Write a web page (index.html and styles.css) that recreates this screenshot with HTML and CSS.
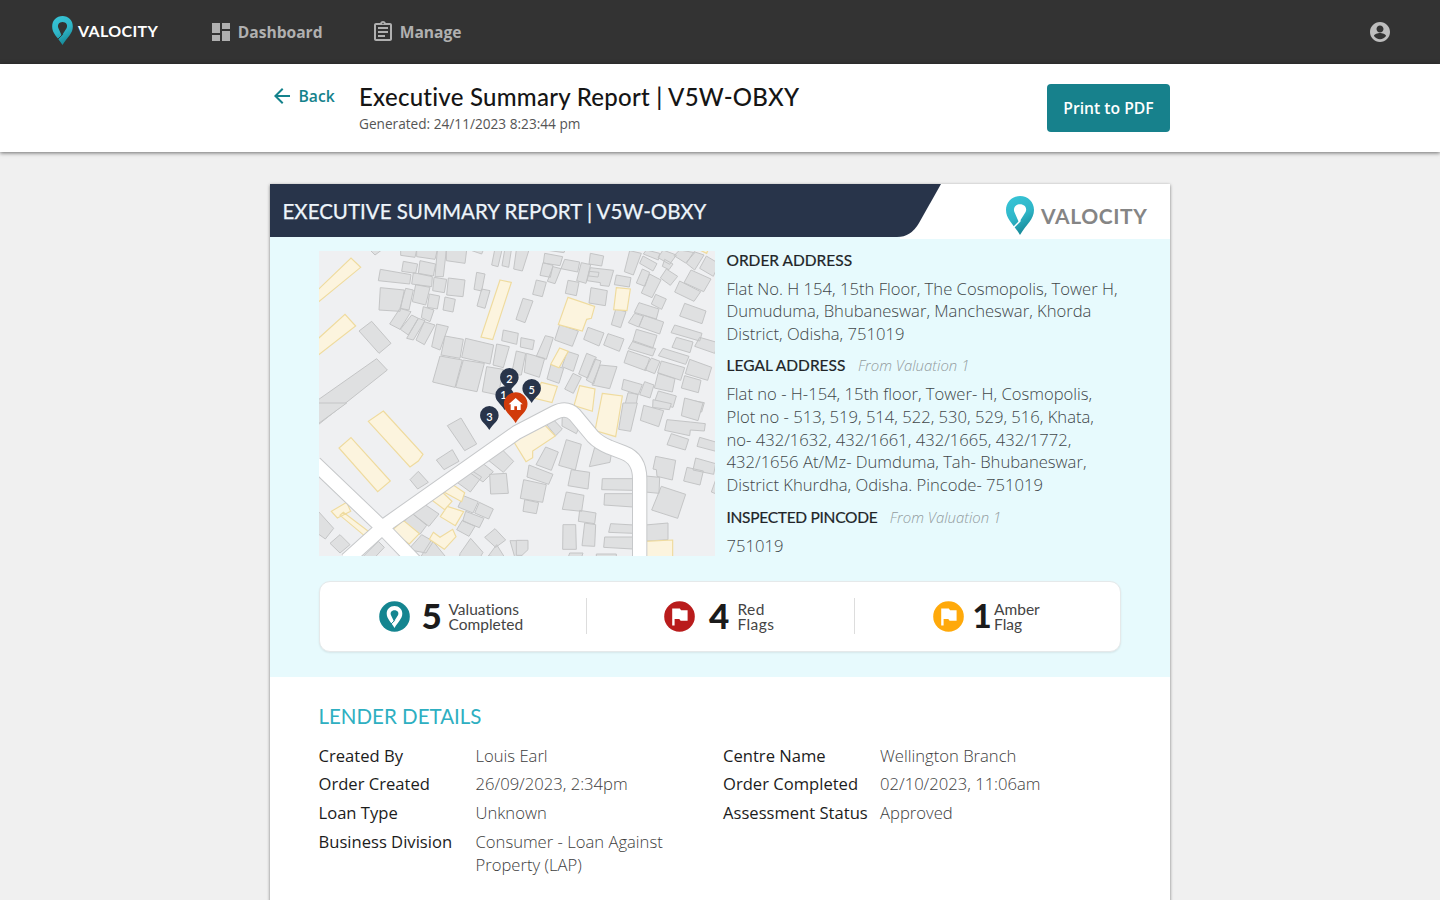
FILE: index.html
```html
<!DOCTYPE html>
<html lang="en">
<head>
<meta charset="utf-8">
<title>Executive Summary Report</title>
<link rel="stylesheet" href="styles.css">
</head>
<body>
<svg class="defs" width="0" height="0" aria-hidden="true">
  <defs>
    <linearGradient id="teal" x1="0" y1="0" x2="0.4" y2="1"><stop offset="0" stop-color="#38c6d8"/><stop offset=".6" stop-color="#2fb6c8"/><stop offset="1" stop-color="#198c9b"/></linearGradient>
    <mask id="slit"><rect width="28" height="39" fill="#fff"/><path d="M14.500 24.500L7 32" stroke="#000" stroke-width="1.300"/></mask>
    <symbol id="brand-pin" viewBox="0 0 28 39">
      <path mask="url(#slit)" fill="url(#teal)" fill-rule="evenodd" d="M14 0C6 0 0 6 0 14c0 9.500 7.500 14 14 25 6.500-11 14-15.500 14-25C28 6 22 0 14 0zM14 8.200c-4.600 0-7.200 3.800-5.600 7.800L13 26.500 19.600 16c1.800-4-.8-7.800-5.600-7.800z"/>
    </symbol>
    <symbol id="map-pin" viewBox="0 0 20 25"><path d="M10 0a9.600 9.600 0 0 0-9.600 9.600C.4 16 6 18 10 25c4-7 9.600-9 9.600-15.400A9.600 9.600 0 0 0 10 0z"/></symbol>
    <symbol id="flag" viewBox="0 0 31 31"><circle cx="15.500" cy="15.500" r="15.300" fill="currentColor"/><path fill="#fff" d="M8.200 7.500h7.600l1.300 1.800h6.500v10.500h-7l-1.300-1.900h-4.700v6.600H8.200z"/></symbol>
  </defs>
</svg>
<header class="topbar">
  <div class="brand"><svg class="brand-icon"><use href="#brand-pin"/></svg><span class="brand-name">VALOCITY</span></div>
  <nav class="nav">
    <a class="nav-item dashboard"><svg viewBox="0 0 24 24"><path d="M3 13h8V3H3v10zm0 8h8v-6H3v6zm10 0h8V11h-8v10zm0-18v6h8V3h-8z"/></svg><span>Dashboard</span></a>
    <a class="nav-item"><svg viewBox="0 0 24 24"><path d="M7 15h7v2H7zm0-4h10v2H7zm0-4h10v2H7zm12-4h-4.180C14.400 1.840 13.300 1 12 1s-2.400.84-2.820 2H5c-1.100 0-2 .9-2 2v14c0 1.100.9 2 2 2h14c1.100 0 2-.9 2-2V5c0-1.100-.9-2-2-2zm-7-.25c.41 0 .75.340.75.750s-.34.750-.75.750-.75-.34-.75-.75.340-.75.750-.75zM19 19H5V5h14v14z"/></svg><span>Manage</span></a>
  </nav>
  <svg class="account" viewBox="0 0 24 24"><path d="M12 2C6.480 2 2 6.480 2 12s4.480 10 10 10 10-4.480 10-10S17.520 2 12 2zm0 3.500c1.930 0 3.500 1.570 3.500 3.500S13.930 12.500 12 12.500 8.500 10.930 8.500 9 10.070 5.500 12 5.500zm0 13.700c-2.500 0-4.710-1.280-6-3.220.030-1.990 4-3.080 6-3.080s5.970 1.090 6 3.080c-1.290 1.940-3.500 3.220-6 3.220z"/></svg>
</header>
<section class="titlebar">
  <div class="title-inner">
    <a class="back"><svg viewBox="0 0 24 24"><path d="M20 11H7.830l5.590-5.590L12 4l-8 8 8 8 1.410-1.410L7.830 13H20v-2z"/></svg><span>Back</span></a>
    <div class="titles"><h1><span>Executive Summary Report | V5W-OBXY</span></h1><p>Generated: 24/11/2023 8:23:44 pm</p></div>
    <button class="print">Print to PDF</button>
  </div>
</section>
<main class="report">
  <div class="report-head">
    <svg class="ribbon" viewBox="0 0 671 54.500"><path fill="#e7fafd" d="M0 52h630v3H0z"/><path fill="#28344a" d="M0 0h671l-22 39q-8 14-22 14H0z"/></svg>
    <h2><span>EXECUTIVE SUMMARY REPORT | V5W-OBXY</span></h2>
    <div class="report-brand"><svg><use href="#brand-pin"/></svg><span>VALOCITY</span></div>
  </div>
  <section class="summary">
    <div class="location">
      <svg class="map" viewBox="2 3 1188 915">
        <rect width="1200" height="920" fill="#eff0f2"/>
        <g class="building">
          <path d="M155 0l15 15 20-15zM247 0v16l43 6 5-22zM295 0v20l55 8 7-28zM357 0l-7 80h25l9-80zM384 0v32l56 8 5-40zM455 0l35 12 5-12zM255 34l43 8-6 28-42-6zM305 32l47 10-7 36-45-8zM186 58l92 16-4 28-94-10zM285 68l57 12-2 30-60-8zM347 82l38 6-7 40-35-6zM390 84l50 6-6 50-49-5zM186 113l72 7-13 64-63-4zM262 115l23 5-13 60-27-5zM292 104l43 8-13 53-40-10zM333 132l31 6-7 39-30-5zM380 141l31 7-7 38-30-6zM315 170l32 10-12 35-26-12zM245 175l33 10-33 53-31-16zM280 195l20 10-30 50-24-17zM300 205l20 7-35 58-20-5zM318 215l32 10-32 59-25-14zM355 222l35 8-25 70-25-10zM160 214l58 66-36 30-60-67zM175 326l32 34L0 524v-75zM380 258l55 10-10 57-57-10zM442 265l84 20-11 57-85-20zM365 318l67 12-22 82-67-16zM435 330l63 10-22 85-64-13zM535 282l38 8-18 63-31-8zM505 350l50 8-15 77-48-10zM475 67l25 5-10 51-23-5zM490 117l25 5-15 53-24-7zM555 240l45 10-5 33-45-11z"/>
          <path transform="translate(594)" d="M-65 0h22l-12 50-19-5zM-35 0h20l-8 52-20-5zM0 0h38L18 63l-26-6zM85 10l54 10-8 27-50-8zM88 0l55 8 3-8zM80 38l30 8-8 36-31-6zM110 50l24 6-18 45-23-7zM145 28l45 8-6 30-50-10zM195 38l28 6-14 56-28-8zM222 10l40 8-6 30-38-6zM222 53l70 8-14 48-26-3v-8l-40-6zM218 64l30 3-3 14-28-3zM60 90l30 7-12 43-29-7zM155 91l33 6-8 40-33-7zM300 75l44 8-5 28-45-7zM340 2l35 8-24 65-27-10zM224 113l49 9-6 45-49-8zM390 0l40 10-4 20-45-18zM380 18l42 23-12 22-40-23zM378 57l22 10-14 42-26-10zM400 72l34 18-27 53-32-14zM440 0l40 15-20 28-35-20zM450 57l34 22-22 27-30-22zM445 28l25 14-12 17-20-10zM490 0l45 8-27 31-35-22zM533 5l30 10-28 45-25-20zM570 18l38 23-17 38-41-24zM524 60l60 27-22 38-59-27zM490 93l63 32-20 29-58-28zM418 133l32 14-14 31-31-16zM368 158l60 19-8 30-66-20zM505 160l64 23-12 38-67-23zM355 190l26 8-14 33-31-13zM382 196l60 20-12 36-62-22zM475 225l82 25-7 23-86-25zM360 238l62 18-13 39-60-20zM480 262l50 14-9 32-54-16zM550 262l55 16-10 32-60-21zM350 272l68 24-9 22-73-22zM335 302l65 22-12 38-65-24zM405 324l26 10-16 37-30-12zM440 295l78 24-10 24-82-26zM435 333l70 20-12 38-69-23zM520 328l66 24-12 39-67-20zM425 370l51 16-8 40-54-12zM505 377l49 14-8 37-51-14zM322 388l56 16-12 30-50-16zM385 395l28 10-12 39-31-10zM335 428l30 5-10 55-33-8zM426 423l54 15-10 34-57-13zM510 448l54 10-8 28-50-10zM20 145l30 8-24 65-27-10zM130 224l56 19-18 46-53-19zM215 232l48 17-15 39-46-20zM275 251l48 16-14 37-47-19zM298 178l31 7-16 48-28-9zM87 257l24 6-21 65-30-9zM14 263l40 8-5 28-37-8zM153 304l34 11-16 49-34-14zM104 343l38 12-14 45-36-13zM30 310l55 15-16 57-45-15zM0 303l28 7-13 65h-30zM211 310l29 12-26 62-27-12zM235 327l19 6-22 69-22-12zM252 345l50 5-22 66-53-11zM170 370l25 12-24 48-26-13z"/>
          <path transform="translate(0 459)" d="M0 0h85L0 62zM428 45l47 78-36 20-52-75zM402 140l20 35-45 25-23-29zM300 205l30 33-32 20-23-28zM540 128l46 47-31 33-47-38zM482 172l43 34-31 31-42-30zM514 214l50-3 6 60-53 2zM440 190l50 32-34 45-48-35zM435 278l45 18-16 34-45-18zM483 298l42 20-14 30-42-18zM442 325l55 21-14 28-50-20zM432 352l38 18-18 30-37-20zM530 377l32 34-30 22-33-30zM457 406l37 42-12 22h-60l3-18zM535 425l25 40-50-6zM310 298l52 35-30 37-50-38zM280 330l45 37-20 27-48-38zM310 395l35 20-22 35-53-10zM340 410l45 55h-80zM0 325l46 51-25 32-21-15zM65 395l30 30-30 25-30-29zM180 415l18 18-30 32h-38zM575 413h35v52h-20z"/>
          <path transform="translate(594 459)" d="M100 38l38 40-20 20-37-45zM138 28l52 42-10 22-43-23zM320 0h43l-20 85-36-6zM382 7l60 16-15 48-55-19zM410-10l55 12-6 18-50-7zM505-15l55 15-15 53-50-15zM452 50l70 7 45 5-3 22-42-3-2 17-75-16zM465 92l52 17-10 32-55-16zM550 103l55 16-6 26-57-15zM88 132l38 15-21 55-46-17zM150 110l45 14-18 77-50-14zM235 133l50 20-4 25-62 13zM38 186l72 28-13 30-65-22zM165 200l55 8-5 50-60-10zM22 230l68 15-11 53-67-12zM25 290l42 9-7 33-40-7zM258 227h92v35l-94-2zM265 272h86v40l-88-6zM150 267l53 10-7 48-58-6zM190 322l49 8-4 32-49-7zM140 365h38l2 74h-41zM205 360l33 5-3 65-38-2zM283 362l70 4-1 25-75-3zM265 402h85v36l-88-5zM0 412h35v28l-18 17H0zM388 219l42 4-2 48-41-4zM418 160l60 12-10 59-46-11-2-20-10-2zM538 165l60 17-6 32-62-13zM512 193l49 11-10 42-49-12zM435 250l73 24-24 72-78-25zM375 367l80-7v50l-75 5zM600 225l-15 42 20 8zM160 450h40l-5 15h-40zM240 453h60v10h-60z"/>
        </g>
        <g class="landmark">
          <path d="M-5 123L98 24l29 28L-5 160zM-5 270l85-77 32 35-117 91zM545 90l34 7-56 172-35-8z"/>
          <path transform="translate(594)" d="M155 142l80 27-10 36-14 3-13 35-72-19zM300 113l42 4-10 65-40-3zM130 294l26 10-28 49-25-10zM550 0h25l-4 10zM75 397l48 12-16 49-52-13zM190 407l46 10-8 67-55-17zM258 430l60 8-20 122-62-18z"/>
          <path transform="translate(0 459)" d="M195 24l119 130-14 20-25 18L150 55zM98 104l118 130-38 32L62 135zM85 298l12 27-40 20-18-20zM75 328l75 57-13 12-72-60zM388 235l51 34-9 27-64-35zM365 261l36 34-22 25-44-33zM387 310l49 16-25 42-45-27zM255 352l48 40-30 31-55-38zM345 388l20 15 38-24 10 22-35 38-45-30z"/>
          <path transform="translate(594 459)" d="M75 55l42 44-68 45v20l-20 12-38-62zM385 415l84-4v55h-90z"/>
        </g>
        <g class="roads"><path d="M-10 640L190 831 300 945M85 930L200 826 594 548l115-60q36-18 60 6l55 66q17 18 50 32l42 16q48 18 48 78v244"/></g>
        <g class="roads white"><path d="M-10 640L190 831 300 945M85 930L200 826 594 548l115-60q36-18 60 6l55 66q17 18 50 32l42 16q48 18 48 78v244"/></g>
        <g class="pins">
          <use href="#map-pin" x="530" y="408" width="57" height="72"/><text x="555" y="448">1</text>
          <use href="#map-pin" x="544" y="353" width="58" height="74"/><text x="573" y="399">2</text>
          <use href="#map-pin" x="611" y="386" width="58" height="74"/><text x="640" y="432">5</text>
          <use href="#map-pin" x="484" y="467" width="58" height="74"/><text x="513" y="513">3</text>
          <use class="home-pin" href="#map-pin" x="555" y="425" width="74" height="96"/>
          <path class="home" d="M592 444l21 19h-6v17h-11v-11h-8v11h-11v-17h-6z"/>
        </g>
      </svg>
      <div class="addresses">
        <h3><span class="h-order">ORDER ADDRESS</span></h3>
        <p>Flat No. H 154, 15th Floor, The Cosmopolis, Tower H,<br>Dumuduma, Bhubaneswar, Mancheswar, Khorda<br>District, Odisha, 751019</p>
        <h3><span class="h-legal">LEGAL ADDRESS</span><em>From Valuation 1</em></h3>
        <p>Flat no - H-154, 15th floor, Tower- H, Cosmopolis,<br>Plot no - 513, 519, 514, 522, 530, 529, 516, Khata,<br>no- 432/1632, 432/1661, 432/1665, 432/1772,<br>432/1656 At/Mz- Dumduma, Tah- Bhubaneswar,<br>District Khurdha, Odisha. Pincode- 751019</p>
        <h3><span class="h-pin">INSPECTED PINCODE</span><em>From Valuation 1</em></h3>
        <p>751019</p>
      </div>
    </div>
    <div class="stats">
      <div class="stat valuations"><svg viewBox="0 0 31 31"><circle cx="15.500" cy="15.500" r="15.300" fill="#148590"/><path fill="#fff" fill-rule="evenodd" d="M15.500 5C11 5 7.700 8.300 7.700 12.600c0 5.400 4.400 8.400 7.800 14.400 3.400-6 7.800-9 7.800-14.400C23.300 8.300 20 5 15.500 5zm0 4.300c-2.800 0-4.500 2.200-3.600 4.700l3.100 6.500 4.100-6.500c1-2.500-.7-4.700-3.600-4.700z"/><path d="M15.600 19.500l-4 4" stroke="#148590"/></svg><b>5</b><span>Valuations<br>Completed</span></div>
      <div class="stat red"><svg><use href="#flag"/></svg><b>4</b><span>Red<br>Flags</span></div>
      <div class="stat amber"><svg><use href="#flag"/></svg><b>1</b><span>Amber<br>Flag</span></div>
    </div>
  </section>
  <section class="lender">
    <h2><span>LENDER DETAILS</span></h2>
    <div class="columns">
      <dl><dt>Created By</dt><dd>Louis Earl</dd><dt>Order Created</dt><dd>26/09/2023, 2:34pm</dd><dt>Loan Type</dt><dd>Unknown</dd><dt>Business Division</dt><dd>Consumer - Loan Against<br>Property (LAP)</dd></dl>
      <dl><dt>Centre Name</dt><dd>Wellington Branch</dd><dt>Order Completed</dt><dd>02/10/2023, 11:06am</dd><dt>Assessment Status</dt><dd>Approved</dd></dl>
    </div>
  </section>
</main>
</body>
</html>
```
FILE: styles.css
```css
* { box-sizing: border-box; margin: 0; padding: 0; }
html, body { height: 900px; overflow: hidden; }
body { background: #f0f0f0; font-family: "Open Sans", sans-serif; color: #1c1c1c; font-variant-ligatures: none; }
.defs { display: block; height: 0; }
svg { display: block; flex: none; }

.topbar { height: 64px; background: #333; display: flex; align-items: center; padding: 0 48px 0 52px; color: #b0b0b0; }
.brand { display: flex; align-items: center; width: 157px; gap: 5px; }
.brand-icon { width: 21px; height: 29px; margin-top: -4px; }
.brand-name { font: 700 16px "Lato", sans-serif; color: #fff; letter-spacing: .35px; margin-top: -3px; }
.nav { display: flex; flex: 1; }
.nav-item { display: flex; align-items: center; gap: 4.700px; font-weight: 700; font-size: 15.600px; width: 162px; }
.nav-item svg { width: 24px; height: 24px; fill: currentColor; }
.account { width: 24px; height: 24px; fill: #bdbdbd; }

.titlebar { height: 88px; background: #fff; box-shadow: 0 1px 4px rgba(0,0,0,.55); }
.title-inner { width: 900px; margin: 0 auto; display: flex; padding-top: 18px; }
.back { display: flex; align-items: center; gap: 4.500px; height: 28px; width: 89px; font-size: 15.700px; font-weight: 600; color: #14828c; }
.back svg { width: 24px; height: 24px; fill: currentColor; }
.titles { flex: 1; }
.titles h1 { font: 500 24px/30px "Lato", sans-serif; color: #151515; letter-spacing: .26px; }
.titles p { font-size: 13.650px; line-height: 24px; color: #555; }
.print { width: 123px; height: 48px; margin-top: 2px; border: 0; border-radius: 4px; background: #17818c; color: #fff; font: 600 15.700px "Open Sans", sans-serif; }

.report { width: 900px; height: 760px; margin: 32px auto 0; background: #fff; box-shadow: 0 1px 3px rgba(0,0,0,.5); }
.report-head { display: grid; grid-template-columns: 736px 1fr; height: 54.500px; }
.ribbon { grid-area: 1 / 1; width: 671px; height: 54.500px; }
.report-head h2 { grid-area: 1 / 1; font: 400 20.500px/54px "Lato", sans-serif; color: #eef5fb; padding-left: 12.500px; z-index: 1; -webkit-text-stroke: .25px; }
.report-brand { display: flex; gap: 7px; align-items: center; color: #858585; font: 700 21px "Lato", sans-serif; letter-spacing: .6px; }
.report-brand svg { width: 28px; height: 39px; margin-top: 8px; }
.report-brand span { margin-top: 8px; }

.summary { height: 438.500px; background: #e7fafd; padding: 12px 48.500px 0; }
.location { display: flex; gap: 12px; height: 330px; }
.map { width: 396px; height: 305px; }
.building { fill: #dfe0e1; stroke: #c4c5c6; stroke-width: 3; }
.landmark { fill: #fcf4de; stroke: #efdb9e; stroke-width: 3.500; }
.roads { fill: none; stroke: #c6c8ca; stroke-width: 46; stroke-linejoin: round; }
.roads.white { stroke: #fff; stroke-width: 40; }
.pins { fill: #28344a; }
.pins text { fill: #fff; font: 600 33px "Lato", sans-serif; text-anchor: middle; }
.home-pin { fill: #d13b0b; }
.home { fill: #fff; }
.addresses { white-space: nowrap; margin-top: -1px; }
.addresses h3 { display: flex; align-items: center; font: 400 15.500px/20px "Lato", sans-serif; color: #202427; -webkit-text-stroke: .2px; }
.h-pin { letter-spacing: -.28px; }
.addresses h3 em { font: italic 300 14.950px/20px "Open Sans", sans-serif; color: #929b9d; margin-left: 12.500px; letter-spacing: 0; -webkit-text-stroke: 0; }
.addresses p { font-size: 16.640px; font-weight: 300; line-height: 22.700px; color: #414749; margin: 8px 0 9.700px; }

.stats { width: 802px; height: 71px; display: grid; grid-template-columns: 266.500px 268px 267.500px; border: 1.500px solid #e5e9ea; border-radius: 11px; background: #fff; box-shadow: 0 1px 2px rgba(0,0,0,.08); }
.stat { display: flex; align-items: center; height: 36px; margin-top: 16.500px; font-family: "Lato", sans-serif; }
.stat + .stat { border-left: 1.500px solid #ddd; }
.stat svg { width: 31px; height: 31px; }
.stat b { font: 900 35px/36px "Lato", sans-serif; width: 20px; margin: -2px 0 0 12px; color: #1b1b1b; }
.stat span { font-size: 15.500px; line-height: 15px; color: #444; margin: 1px 0 0 7px; }
.valuations { padding-left: 59px; }
.red { padding-left: 77px; color: #b91c1c; }
.red b { margin-left: 14px; }
.red span { margin-left: 8.500px; letter-spacing: .4px; }
.amber { padding-left: 77.500px; color: #ffa90a; }
.stat.amber b { margin-left: 9px; width: 19px; font-size: 33px; }
.stat.amber span { margin-left: 2.500px; }

.lender { padding: 25px 48.500px 0; }
.lender h2 { font: 400 20.500px/28px "Lato", sans-serif; color: #2eafc1; }
.columns { display: grid; grid-template-columns: 404.500px 1fr; margin-top: 14.500px; }
dl { display: grid; grid-template-columns: 157px 1fr; row-gap: 6.100px; align-content: start; font-size: 16.640px; line-height: 22.700px; white-space: nowrap; }
dt { font-size: 16.600px; }
dd { font-weight: 300; color: #3d3d3d; }
```
